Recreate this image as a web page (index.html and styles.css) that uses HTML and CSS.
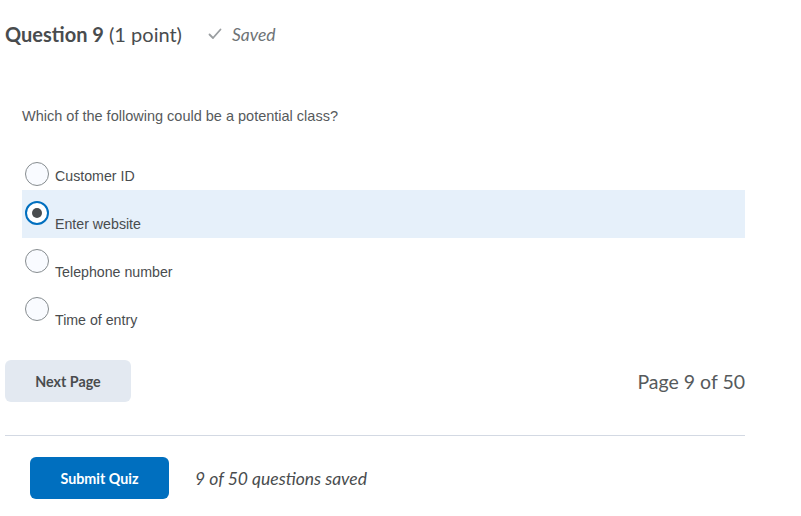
FILE: index.html
```html
<!DOCTYPE html>
<html>
<head>
<meta charset="utf-8">
<link rel="stylesheet" href="styles.css">
</head>
<body>
<div class="page">
  <div class="qhead">
    <h2 class="qtitle"><strong>Question 9</strong> <span class="pts">(1 point)</span></h2>
    <span class="saved">
      <svg class="check" width="14" height="12" viewBox="0 0 14 12"><path d="M1.5 6.5 L5 10 L12.5 1.5" fill="none" stroke="#9a9ea1" stroke-width="1.8" stroke-linecap="round" stroke-linejoin="round"/></svg>
      <em>Saved</em>
    </span>
  </div>
  <p class="qtext">Which of the following could be a potential class?</p>
  <div class="options">
    <div class="opt first"><span class="radio"></span><span class="label">Customer ID</span></div>
    <div class="opt sel"><span class="radio checked"></span><span class="label">Enter website</span></div>
    <div class="opt"><span class="radio"></span><span class="label">Telephone number</span></div>
    <div class="opt"><span class="radio"></span><span class="label">Time of entry</span></div>
  </div>
  <div class="nav">
    <button class="btn next">Next Page</button>
    <span class="pageinfo">Page 9 of 50</span>
  </div>
  <hr class="sep">
  <div class="submit">
    <button class="btn primary">Submit Quiz</button>
    <em class="count">9 of 50 questions saved</em>
  </div>
</div>
</body>
</html>
```
FILE: styles.css
```css
html, body { margin: 0; padding: 0; background: #fff; }
body { font-family: Lato, "Noto Sans", sans-serif; color: #494c4e; }
.page { width: 740px; padding-left: 5px; }
.qhead { display: flex; align-items: center; height: 30px; margin-top: 19px; }
.qtitle { margin: 0; font-size: 20px; font-weight: 400; color: #494c4e; line-height: 30px; }
.qtitle strong { font-weight: 700; }
.saved { display: flex; align-items: center; margin-left: 26px; color: #6e7376; font-size: 17.5px; }
.check { margin-right: 10px; }
.saved em { font-style: italic; }
.qtext { margin: 0; margin-top: 59px; padding-left: 17px; font-family: "Liberation Sans", Arial, sans-serif; font-size: 14.5px; line-height: 16px; color: #565a5c; }
.options { margin-top: 18px; padding-left: 17px; }
.opt { display: flex; align-items: flex-start; height: 48px; }
.opt.sel { background: #e6f0fa; }
.radio { box-sizing: border-box; width: 24px; height: 24px; border-radius: 50%; border: 1px solid #868c8f; background: #f9fbff; margin-left: 3px; margin-top: 11px; flex: none; position: relative; }
.opt.first .radio { margin-top: 20px; }
.radio.checked { border: 2px solid #006fbf; background: #fff; }
.radio.checked::after { content: ""; position: absolute; left: 5px; top: 5px; width: 10px; height: 10px; border-radius: 50%; background: #494c4e; }
.label { margin-left: 6px; margin-top: 26px; font-family: "Liberation Sans", Arial, sans-serif; font-size: 14.2px; line-height: 16px; color: #494c4e; }
.nav { display: flex; align-items: center; justify-content: space-between; margin-top: 26px; }
.btn { font-family: Lato, "Noto Sans", sans-serif; font-weight: 700; font-size: 14.3px; border: none; border-radius: 6px; height: 42px; padding: 0; }
.next { width: 126px; background: #e3e9f1; color: #494c4e; }
.pageinfo { font-size: 19.5px; color: #565a5c; }
.sep { margin: 33px 0 0 0; border: none; border-top: 1px solid #d3d9e3; height: 0; }
.submit { display: flex; align-items: center; margin-top: 21px; padding-left: 25px; }
.primary { width: 139px; background: #006fbf; color: #fff; }
.count { margin-left: 26px; font-size: 17.5px; color: #494c4e; }
```
